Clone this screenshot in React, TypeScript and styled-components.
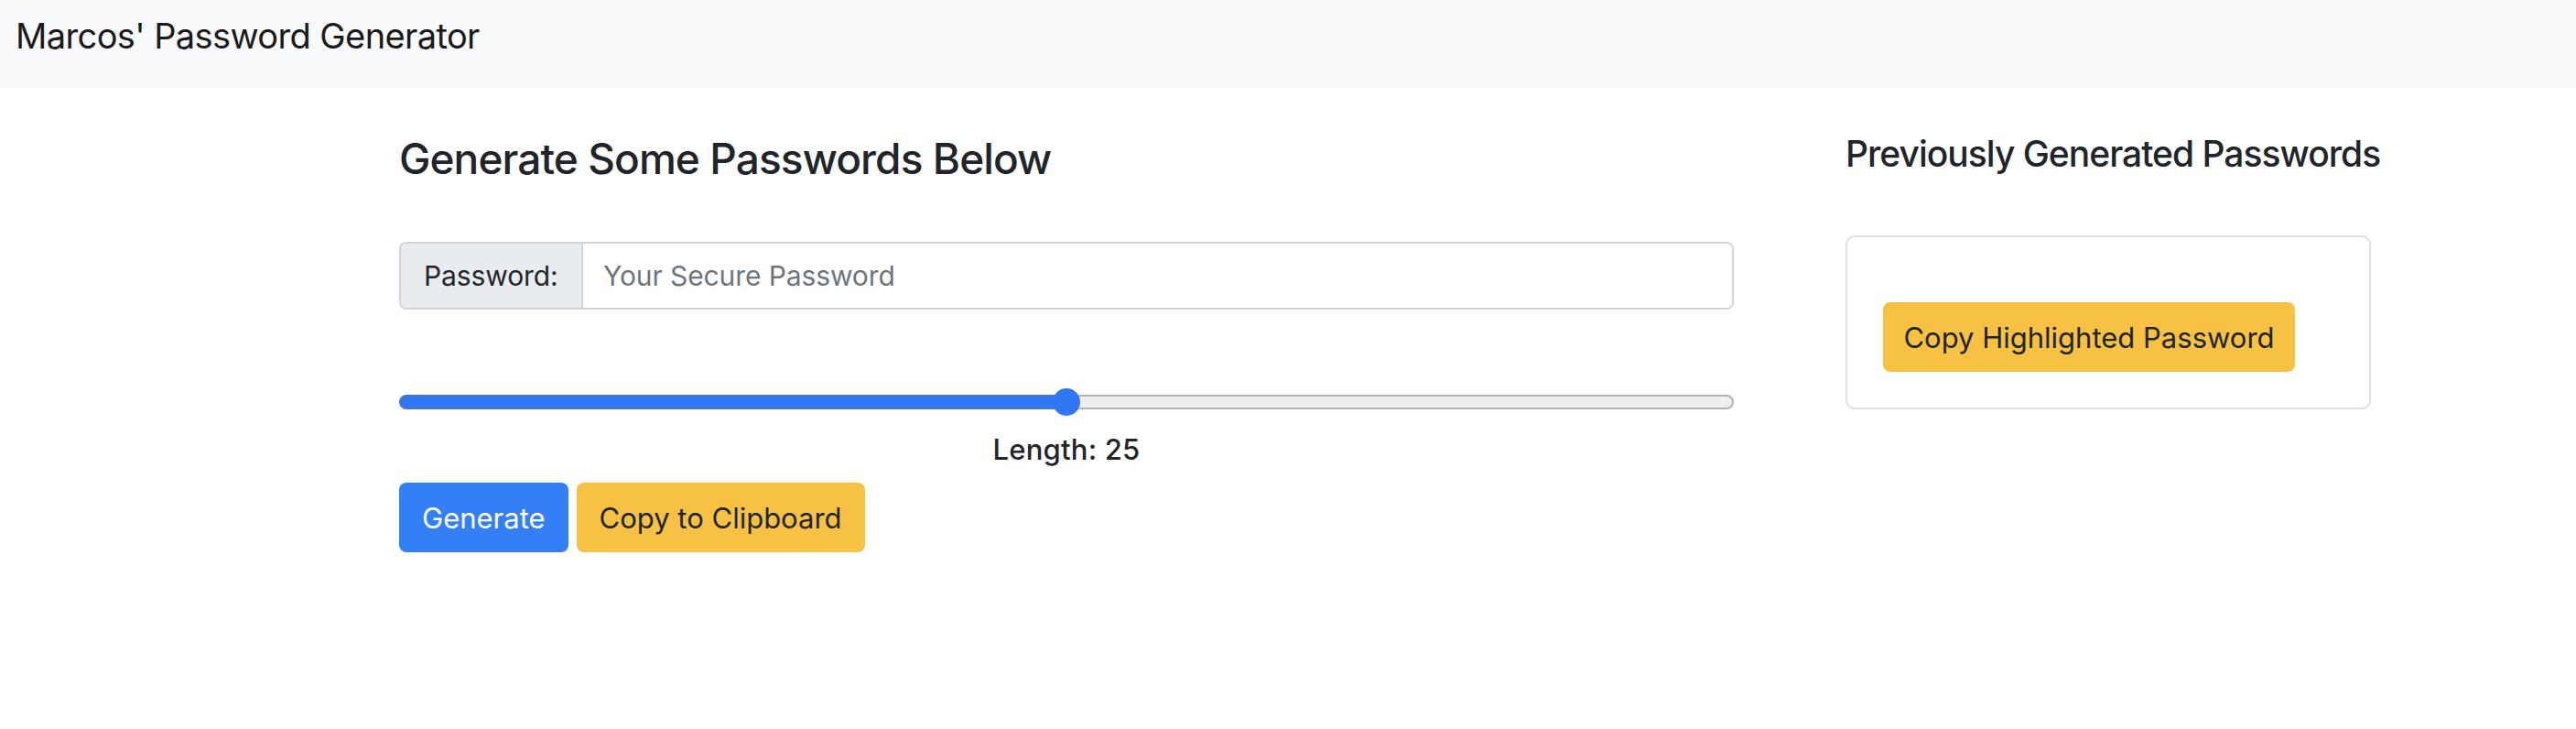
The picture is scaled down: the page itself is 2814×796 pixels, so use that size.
import React, { useState } from "react";
import styled, { createGlobalStyle } from "styled-components";

const GlobalStyle = createGlobalStyle`
  html, body {
    margin: 0;
    padding: 0;
    background: #ffffff;
  }
  body {
    font-family: Inter, "Liberation Sans", Arial, sans-serif;
    color: #212529;
    -webkit-font-smoothing: antialiased;
  }
  * { box-sizing: border-box; }
`;

const NavBar = styled.nav`
  height: 95px;
  background: #f8f9fa;
  padding: 16px 0 0 17px;
`;

const Brand = styled.div`
  font-size: 38px;
  line-height: 46px;
  font-weight: 400;
  color: #1a1a1a;
  letter-spacing: -0.6px;
`;

const Main = styled.main`
  display: grid;
  grid-template-columns: 1458px 582px;
  column-gap: 122px;
  padding-left: 436px;
`;

const Column = styled.section`
  display: flex;
  flex-direction: column;
`;

const Heading = styled.h4<{ $size: number; $top: number; $track: number }>`
  margin: ${(p) => p.$top}px 0 0 0;
  font-size: ${(p) => p.$size}px;
  line-height: ${(p) => Math.round(p.$size * 1.2)}px;
  font-weight: 500;
  letter-spacing: ${(p) => p.$track}px;
  color: #212529;
  white-space: nowrap;
`;

const InputGroup = styled.div`
  margin-top: 63px;
  display: flex;
  height: 74px;
  border: 2px solid #ced4da;
  border-radius: 8px;
  overflow: hidden;
`;

const GroupLabel = styled.label`
  width: 199px;
  flex: none;
  display: flex;
  align-items: center;
  padding-left: 25px;
  background: #e9ecef;
  border-right: 2px solid #ced4da;
  font-size: 30px;
  color: #212529;
  letter-spacing: -0.1px;
`;

const TextInput = styled.input`
  flex: 1;
  border: none;
  outline: none;
  padding: 0 0 0 22px;
  font-family: inherit;
  font-size: 30px;
  color: #212529;
  letter-spacing: -0.1px;
  background: #fff;
  &::placeholder {
    color: #6c757d;
  }
`;

const Range = styled.input`
  margin: 86px 0 0 0;
  width: 100%;
  height: 30px;
  -webkit-appearance: none;
  appearance: none;
  background: transparent;
  outline: none;

  &::-webkit-slider-runnable-track {
    height: 16px;
    border-radius: 8px;
    border: 2px solid transparent;
    background:
      linear-gradient(to right, #2f78f5 var(--fill), #efefef var(--fill)) padding-box,
      linear-gradient(to right, #4b73b8 var(--fill), #b2b2b2 var(--fill)) border-box;
  }
  &::-webkit-slider-thumb {
    -webkit-appearance: none;
    appearance: none;
    width: 30px;
    height: 30px;
    border-radius: 50%;
    background: #3176f5;
    border: none;
    margin-top: -9px;
  }
`;

const LengthLabel = styled.div`
  margin-top: 19px;
  text-align: center;
  font-size: 31px;
  line-height: 36px;
  font-weight: 500;
  color: #212529;
  letter-spacing: 0.2px;
`;

const ButtonRow = styled.div`
  margin-top: 18px;
  display: flex;
  gap: 9px;
`;

const Button = styled.button<{ $variant: "primary" | "warning"; $width?: number }>`
  height: 76px;
  ${(p) => (p.$width ? `width: ${p.$width}px;` : "padding: 0 25px;")}
  border: none;
  border-radius: 8px;
  font-family: inherit;
  font-size: 31px;
  letter-spacing: 0;
  cursor: pointer;
  background: ${(p) => (p.$variant === "primary" ? "#3380f6" : "#f7c244")};
  color: ${(p) => (p.$variant === "primary" ? "#ffffff" : "#212529")};
`;

const Card = styled.div`
  margin-top: 66px;
  width: 574px;
  height: 190px;
  border: 2px solid #dfdfdf;
  border-radius: 10px;
  padding: 71px 0 0 39px;
`;

export default function App() {
  const [len, setLen] = useState(25);
  const min = 0;
  const max = 50;
  const fill = `${((len - min) / (max - min)) * 100}%`;
  return (
    <>
      <GlobalStyle />
      <NavBar>
        <Brand>Marcos' Password Generator</Brand>
      </NavBar>
      <Main>
        <Column>
          <Heading $size={46} $top={51} $track={-0.9}>Generate Some Passwords Below</Heading>
          <InputGroup>
            <GroupLabel htmlFor="pw">Password:</GroupLabel>
            <TextInput id="pw" type="text" placeholder="Your Secure Password" readOnly />
          </InputGroup>
          <Range
            type="range"
            min={min}
            max={max}
            value={len}
            onChange={(e) => setLen(Number(e.target.value))}
            style={{ ["--fill" as any]: fill }}
          />
          <LengthLabel>Length: {len}</LengthLabel>
          <ButtonRow>
            <Button $variant="primary">Generate</Button>
            <Button $variant="warning">Copy to Clipboard</Button>
          </ButtonRow>
        </Column>
        <Column>
          <Heading $size={39} $top={49} $track={-1}>Previously Generated Passwords</Heading>
          <Card>
            <Button $variant="warning" $width={450}>Copy Highlighted Password</Button>
          </Card>
        </Column>
      </Main>
    </>
  );
}
